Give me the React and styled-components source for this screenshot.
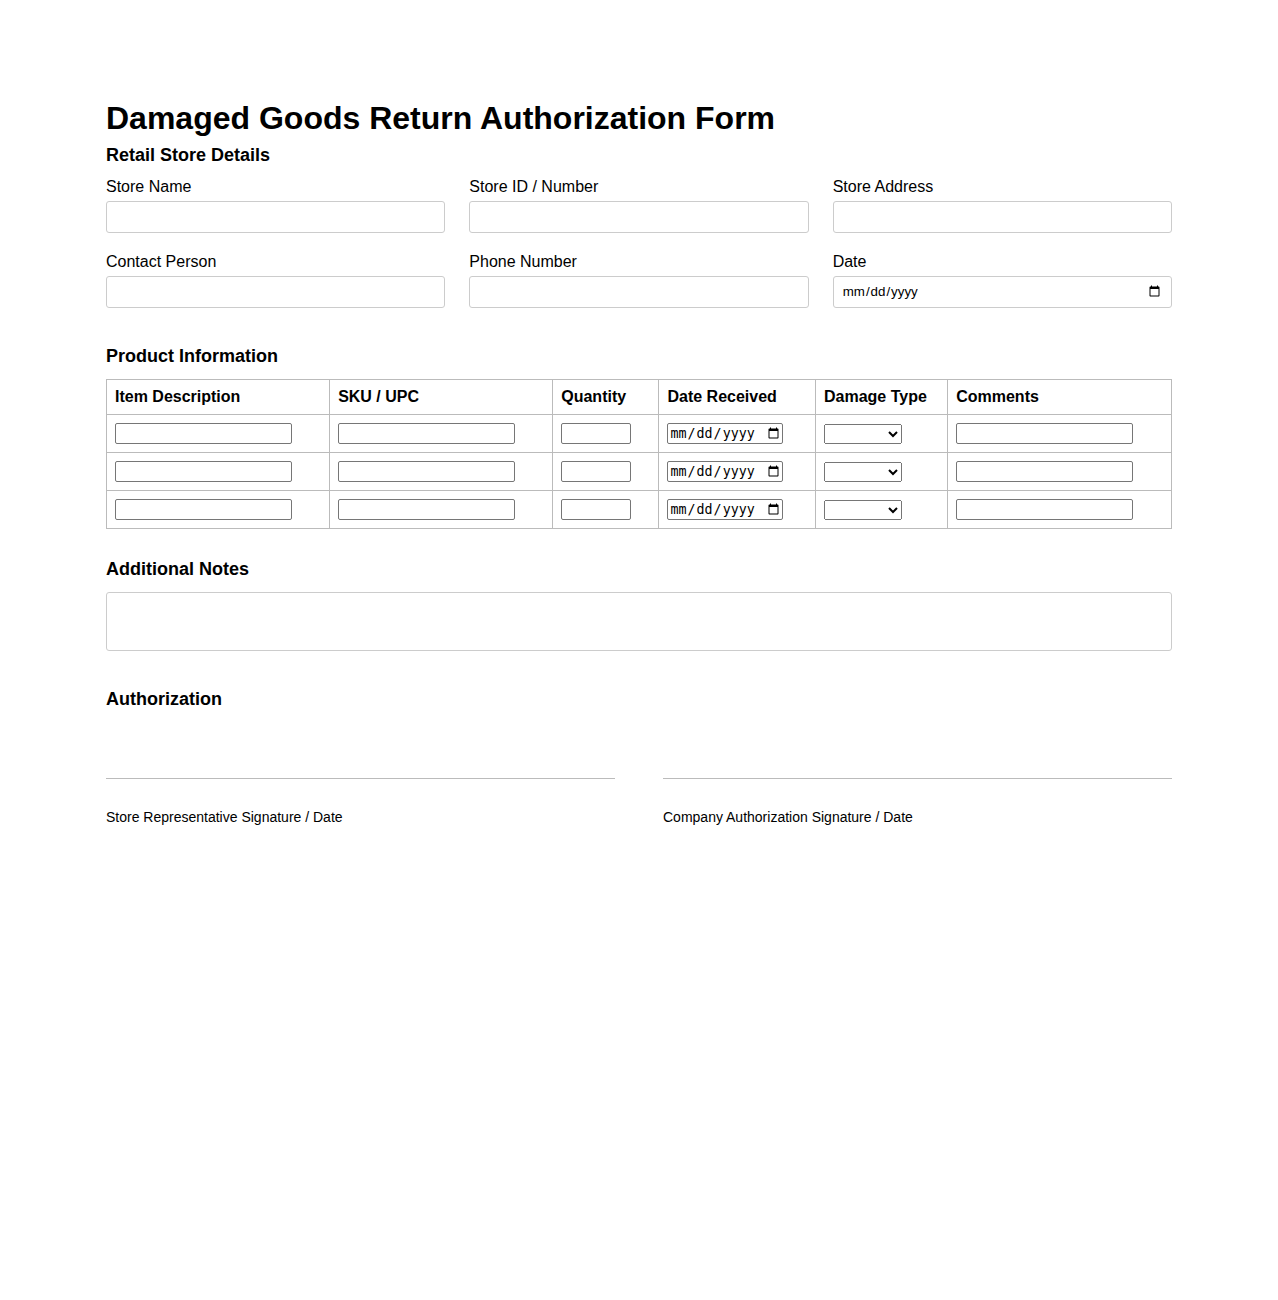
import React from 'react';
import styled, { createGlobalStyle } from 'styled-components';

const Global = createGlobalStyle`
  body { margin: 0; background: #fff; font-family: "Liberation Sans", Arial, sans-serif; color: #000; }
`;

const Page = styled.div`
  max-width: 1066px;
  margin: 0 auto;
  padding: 100px 0 60px;
`;

const Title = styled.h1`
  font-size: 32px;
  font-weight: 700;
  margin: 0 0 8px;
`;

const SectionTitle = styled.h2`
  font-size: 18px;
  font-weight: 700;
  margin: ${p => p.$top || 0}px 0 12px;
`;

const FieldGrid = styled.div`
  display: grid;
  grid-template-columns: repeat(3, 1fr);
  column-gap: 24px;
  row-gap: 20px;
`;

const Field = styled.div`
  display: flex;
  flex-direction: column;
`;

const Label = styled.label`
  font-size: 16px;
  margin-bottom: 5px;
`;

const TextInput = styled.input`
  height: 32px;
  box-sizing: border-box;
  border: 1px solid #ccc;
  border-radius: 3px;
  padding: 4px 8px;
  font-family: inherit;
`;

const Table = styled.table`
  width: 100%;
  border-collapse: collapse;
  border: 1px solid #bbb;
`;

const Th = styled.th`
  text-align: left;
  font-size: 16px;
  font-weight: 700;
  padding: 8px;
  height: 18px;
  border: 1px solid #bbb;
  width: ${p => p.$w}px;
`;

const Td = styled.td`
  padding: 8px;
  border: 1px solid #bbb;
  height: 21px;
`;

const CellInput = styled.input`
  width: ${p => p.$w || 177}px;
  box-sizing: border-box;
  height: 21px;
  border: 1px solid #767676;
  border-radius: 2px;
`;

const CellSelect = styled.select`
  width: 78px;
  height: 20px;
`;

const Notes = styled.textarea`
  width: 100%;
  height: 59px;
  box-sizing: border-box;
  border: 1px solid #ccc;
  border-radius: 3px;
  resize: none;
  display: block;
`;

const SigRow = styled.div`
  display: grid;
  grid-template-columns: 1fr 1fr;
  column-gap: 48px;
  margin-top: 68px;
`;

const SigLine = styled.div`
  border-top: 1px solid #bbb;
  padding-top: 30px;
  font-size: 14px;
`;

const fields = [
  ['Store Name', 'text'], ['Store ID / Number', 'text'], ['Store Address', 'text'],
  ['Contact Person', 'text'], ['Phone Number', 'text'], ['Date', 'date'],
];

const cols = [
  ['Item Description', 224], ['SKU / UPC', 224], ['Quantity', 101],
  ['Date Received', 154], ['Damage Type', 138], ['Comments', 225],
];

export default function App() {
  return (
    <Page>
      <Global />
      <Title>Damaged Goods Return Authorization Form</Title>
      <SectionTitle>Retail Store Details</SectionTitle>
      <FieldGrid>
        {fields.map(([l, t]) => (
          <Field key={l}>
            <Label>{l}</Label>
            <TextInput type={t} />
          </Field>
        ))}
      </FieldGrid>

      <SectionTitle $top={38}>Product Information</SectionTitle>
      <Table>
        <thead>
          <tr>{cols.map(([c, w]) => <Th key={c} $w={w}>{c}</Th>)}</tr>
        </thead>
        <tbody>
          {[0, 1, 2].map(i => (
            <tr key={i}>
              <Td><CellInput /></Td>
              <Td><CellInput /></Td>
              <Td><CellInput $w={70} /></Td>
              <Td><CellInput type="date" $w={116} /></Td>
              <Td><CellSelect><option></option></CellSelect></Td>
              <Td><CellInput /></Td>
            </tr>
          ))}
        </tbody>
      </Table>

      <SectionTitle $top={30}>Additional Notes</SectionTitle>
      <Notes />

      <SectionTitle $top={38}>Authorization</SectionTitle>
      <SigRow>
        <SigLine>Store Representative Signature / Date</SigLine>
        <SigLine>Company Authorization Signature / Date</SigLine>
      </SigRow>
    </Page>
  );
}
